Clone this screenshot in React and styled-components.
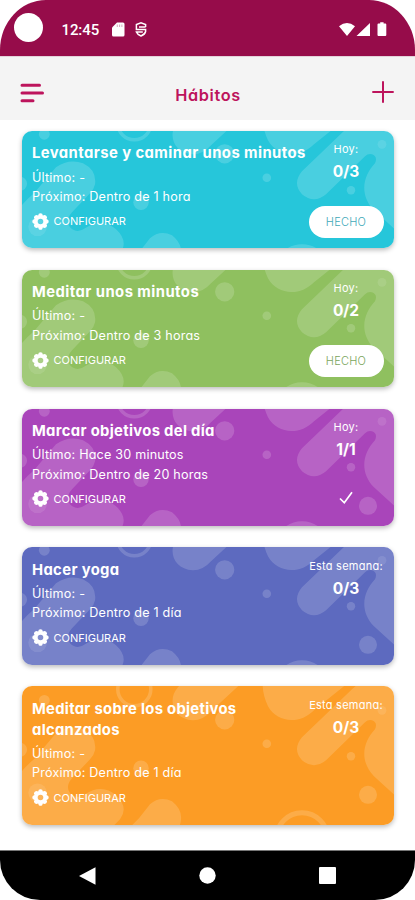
import React from "react";
import styled, { createGlobalStyle } from "styled-components";

const GlobalStyle = createGlobalStyle`
  * { box-sizing: border-box; }
  body {
    margin: 0;
    background: #fff;
    font-family: Inter, "Open Sans", sans-serif;
    font-feature-settings: "cv11" 1;
  }
  button { font: inherit; font-feature-settings: inherit; border: 0; padding: 0; background: none; color: inherit; }
`;

const Screen = styled.div`
  display: flex;
  flex-direction: column;
  width: 415px;
  height: 900px;
  overflow: hidden;
  background: #fff;
`;

const StatusBar = styled.header`
  display: flex;
  align-items: center;
  flex: none;
  height: 56px;
  padding: 4px 28px 0 14px;
  background: #960c4a;
  border-radius: 46px 46px 0 0 / 50px 50px 0 0;
  color: #fff;
`;

const Camera = styled.span`
  width: 29px;
  height: 29px;
  margin-top: -6px;
  border-radius: 50%;
  background: #fff;
`;

const Clock = styled.time`
  width: 50px;
  margin-left: 18.5px;
  font: 500 15px Roboto, sans-serif;
  letter-spacing: -0.1px;
`;

const StatusIcon = styled.svg`
  display: block;
  flex: none;
  margin-top: -2px;
  margin-left: ${(p) => p.$gap || "0"};
`;

const AppBar = styled.div`
  display: grid;
  grid-template-columns: 30px 1fr 30px;
  align-items: center;
  flex: none;
  height: 64px;
  padding: 9px 17px 0 17px;
  background: #f4f4f4;
  border-top: 1px solid #e3d3da;
  color: #bd145c;
`;

const Title = styled.h1`
  margin: 4px 0 0 1px;
  text-align: center;
  font-size: 16.3px;
  font-weight: 600;
  letter-spacing: 0.65px;
`;

const IconButton = styled.button`
  display: flex;
  justify-content: center;
  margin-top: ${(p) => p.$shift || "0"};
  svg { display: block; }
`;

const List = styled.main`
  display: flex;
  flex-direction: column;
  flex: 1;
  gap: 21.4px;
  padding: 11px 21px 0 22px;
`;

const Card = styled.article`
  display: grid;
  grid-template-columns: 1fr 96px;
  position: relative;
  isolation: isolate;
  flex: none;
  min-height: ${(p) => (p.$tall ? "139px" : "117.4px")};
  border-radius: 10px;
  overflow: hidden;
  background: ${(p) => p.$color};
  color: #fff;
`;

const CardShadow = styled.div`
  flex: none;
  border-radius: 10px;
  box-shadow: 0 2px 5px rgba(0, 0, 0, 0.27);
`;

const Pattern = styled.svg`
  position: absolute;
  z-index: -1;
  left: 0;
  top: 50%;
  transform: translateY(-50%);
`;

const Info = styled.div`
  min-width: 0;
  padding: 12.4px 0 0 10px;
`;

const Name = styled.h2`
  margin: 0 0 3px;
  font-size: 14.8px;
  line-height: 21.2px;
  font-weight: 650;
  letter-spacing: ${(p) => p.$tracking};
  white-space: pre;
`;

const Detail = styled.p`
  margin: 0;
  font-size: 12.6px;
  line-height: 19.4px;
  letter-spacing: 0.2px;
`;

const Configure = styled.button`
  display: flex;
  align-items: center;
  gap: 4.5px;
  height: 18px;
  margin-top: 6px;
  font-size: 11px;
  letter-spacing: 0;
`;

const Progress = styled.div`
  display: flex;
  flex-direction: column;
  align-items: center;
  padding-top: 10.4px;
`;

const Period = styled.span`
  font-size: 11px;
  line-height: 17px;
  letter-spacing: 0.25px;
  white-space: nowrap;
`;

const Count = styled.strong`
  margin-top: 2px;
  font-size: 15.5px;
  line-height: 24px;
  font-weight: 700;
`;

const DoneButton = styled.button`
  width: 75px;
  height: 32px;
  margin-top: 21.6px;
  border-radius: 16px;
  background: #fff;
  color: ${(p) => p.$color};
  font-size: 11px;
  font-weight: 300;
  letter-spacing: 0.25px;
`;

const Check = styled.svg`
  margin-top: 29px;
`;

const NavBar = styled.nav`
  display: flex;
  align-items: center;
  justify-content: space-between;
  flex: none;
  height: 50px;
  padding: 0 79px;
  background: #000;
  border-top: 1px solid #777;
  border-radius: 0 0 40px 40px;
`;

function Blobs() {
  return (
    <Pattern width="372" height="160" viewBox="0 -21.3 372 160" fill="#fff">
      <g opacity="0.16">
        <circle cx="22.3" cy="3" r="5.4" />
        <circle cx="-2" cy="52.5" r="7" />
        <path d="M34 36Q47 27 61 32Q75 39 73 53Q72 58 68 62L50 81Q43 89 48 96Q55 103 63 97Q80 86 94 98Q107 110 98 122L80 140H-5V81Q0 72 12 62Z" />
        <circle cx="112.3" cy="-8" r="16.5" fill="none" stroke="#fff" strokeWidth="3.5" />
        <path d="M171 23C151 22 145 2 156-10L168-24H230L189 14Q181 23 171 23Z" />
        <circle cx="119" cy="71" r="7.7" />
        <path d="M117 121L128 107Q138 98 150 104Q160 112 159 122Q158 134 149 140H98Z" />
        <circle cx="202.7" cy="22.5" r="9.6" />
        <circle cx="244.8" cy="46.5" r="4.3" />
        <path d="M242-24H338L292 13C277 28 255 25 246 9Q238-8 242-24Z" />
        <path d="M280 40L330-8L348-24H374V99L352 79C337 63 341 45 353 32Q356 25 350 23Q346 22 343 25L304 63Q292 73 280 63Q270 52 280 40Z" />
        <circle cx="329" cy="59" r="4.2" />
        <circle cx="346" cy="97.5" r="9" />
        <circle cx="280" cy="141" r="25.5" fill="none" stroke="#fff" strokeWidth="5" />
      </g>
      <g opacity="0.1">
        <circle cx="360" cy="13" r="4.4" />
        <circle cx="15.6" cy="95.5" r="9.3" />
      </g>
    </Pattern>
  );
}

function Gear() {
  return (
    <svg width="17" height="17" viewBox="0 0 17 17">
      <path fill="#fff" fillRule="evenodd" d="M6.8.7Q8.5-.3 10.2.7L10.8 2.4L12.7 1.9Q14.6 2.4 15.1 4.3L14.5 6.1L16.2 6.9Q17.1 8.5 16.2 10.1L14.5 10.9L15.1 12.7Q14.6 14.6 12.7 15.1L10.8 14.6L10.2 16.3Q8.5 17.3 6.8 16.3L6.2 14.6L4.3 15.1Q2.4 14.6 1.9 12.7L2.5 10.9L.8 10.1Q-.1 8.5.8 6.9L2.5 6.1L1.9 4.3Q2.4 2.4 4.3 1.9L6.2 2.4ZM8.5 5.7A2.8 2.8 0 1 0 8.5 11.3A2.8 2.8 0 1 0 8.5 5.7Z" />
    </svg>
  );
}

const habits = [
  { name: "Levantarse y caminar unos minutos", last: "-", next: "Dentro de 1 hora", period: "Hoy:", count: "0/3", color: "#27c6da", action: "button", ink: "#3fa9b8", tracking: "0.44px" },
  { name: "Meditar unos minutos", last: "-", next: "Dentro de 3 horas", period: "Hoy:", count: "0/2", color: "#90c060", action: "button", ink: "#7aa55c", tracking: "0.46px" },
  { name: "Marcar objetivos del día", last: "Hace 30 minutos", next: "Dentro de 20 horas", period: "Hoy:", count: "1/1", color: "#aa46ba", action: "check", tracking: "0.33px" },
  { name: "Hacer yoga", last: "-", next: "Dentro de 1 día", period: "Esta semana:", count: "0/3", color: "#5d6abf", tracking: "0.37px" },
  { name: "Meditar sobre los objetivos\nalcanzados", last: "-", next: "Dentro de 1 día", period: "Esta semana:", count: "0/3", color: "#fc9d25", tracking: "0.3px", tall: true },
];

function HabitCard({ habit }) {
  return (
    <CardShadow>
      <Card $color={habit.color} $tall={habit.tall}>
        <Blobs />
        <Info>
          <Name $tracking={habit.tracking}>{habit.name}</Name>
          <Detail>Último: {habit.last}</Detail>
          <Detail>Próximo: {habit.next}</Detail>
          <Configure><Gear />CONFIGURAR</Configure>
        </Info>
        <Progress>
          <Period>{habit.period}</Period>
          <Count>{habit.count}</Count>
          {habit.action === "button" && <DoneButton $color={habit.ink}>HECHO</DoneButton>}
          {habit.action === "check" && (
            <Check width="14" height="14" viewBox="0 0 14 14" fill="none" stroke="#fff" strokeWidth="1.7">
              <path d="M1 7.5L5.3 11.8L13 1.3" />
            </Check>
          )}
        </Progress>
      </Card>
    </CardShadow>
  );
}

export default function App() {
  return (
    <Screen>
      <GlobalStyle />
      <StatusBar>
        <Camera />
        <Clock>12:45</Clock>
        <StatusIcon width="13" height="15" viewBox="0 0 13 15" fill="#fff">
          <path d="M5 .5H11Q12.5.5 12.5 2V13Q12.5 14.5 11 14.5H1.5Q0 14.5 0 13V5.5Z" />
          <path d="M5.3 2.5V5M7.6 2.5V5M9.9 2.5V5" stroke="#960c4a" strokeWidth=".7" opacity=".5" />
        </StatusIcon>
        <StatusIcon $gap="10px" width="12" height="15" viewBox="0 0 12 15" fill="none" stroke="#fff" strokeWidth="1.5">
          <path d="M10.6 5V2.6L6 .9L1.4 2.6V7.4H10.6V9.5Q10 12.4 6 14Q2.3 12.4 1.4 10H7.8M10.6 4.9H4" />
        </StatusIcon>
        <StatusIcon $gap="auto" width="48" height="15" viewBox="0 0 48 15" fill="#fff">
          <path d="M0 4.3Q8-2.4 16 4.3L8 14ZM31 1V14H17.5ZM39.5 1.6H41.2V.2H44.6V1.6H46.3Q47.3 1.6 47.3 2.6V13Q47.3 14 46.3 14H39.5Q38.5 14 38.5 13V2.6Q38.5 1.6 39.5 1.6Z" />
        </StatusIcon>
      </StatusBar>
      <AppBar>
        <IconButton aria-label="Menú">
          <svg width="24" height="20" viewBox="0 0 24 20" fill="none" stroke="currentColor" strokeWidth="3" strokeLinecap="round">
            <path d="M2 2.2H19.5M2 10H22.5M2 17.8H13" />
          </svg>
        </IconButton>
        <Title>Hábitos</Title>
        <IconButton aria-label="Añadir" $shift="-3px">
          <svg width="22" height="22" viewBox="0 0 22 22" stroke="currentColor" strokeWidth="2">
            <path d="M11 .3V21.7M.3 11H21.7" />
          </svg>
        </IconButton>
      </AppBar>
      <List>
        {habits.map((h) => <HabitCard key={h.name} habit={h} />)}
      </List>
      <NavBar>
        <svg width="17" height="18" viewBox="0 0 17 18" fill="#fff"><path d="M0 9L16.5.3V17.7Z" /></svg>
        <svg width="17" height="17" viewBox="0 0 17 17" fill="#fff"><circle cx="8.5" cy="8.5" r="8.2" /></svg>
        <svg width="17" height="17" viewBox="0 0 17 17" fill="#fff"><rect width="17" height="17" rx="1" /></svg>
      </NavBar>
    </Screen>
  );
}
